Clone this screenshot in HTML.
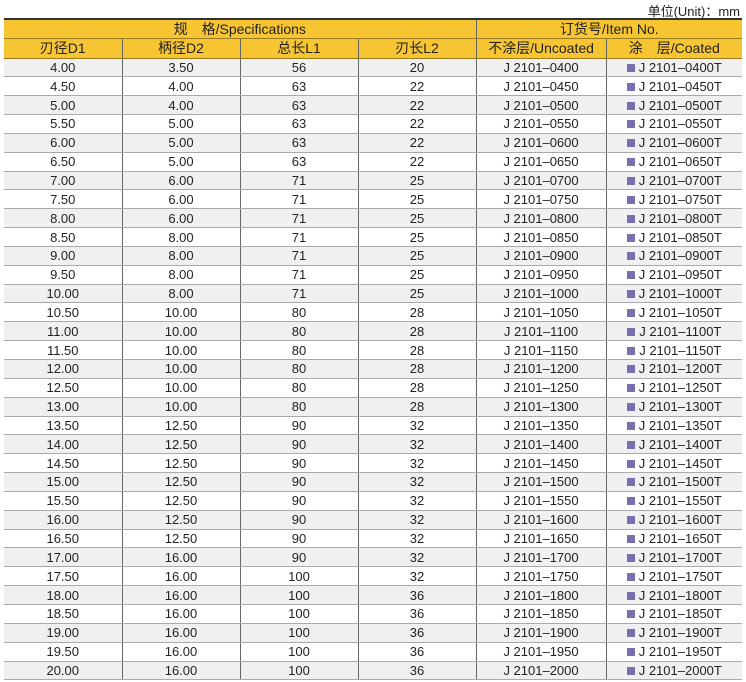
<!DOCTYPE html>
<html><head><meta charset="utf-8"><style>
*{margin:0;padding:0;box-sizing:border-box}
body{width:746px;height:682px;background:#fff;font-family:"Liberation Sans","Noto Sans CJK SC",sans-serif;color:#222;position:relative;overflow:hidden}
.unit{position:absolute;right:6px;top:1px;font-size:13px}
table{position:absolute;left:4px;top:18px;width:738px;border-collapse:collapse;table-layout:fixed;font-size:13px}
td{text-align:center;border-left:1px solid #666;border-bottom:1px solid #aaa;height:18.85px;padding:0;line-height:17px;white-space:nowrap}
td:first-child{border-left:none}
tr.h td{background:#f8c532;border-bottom:1px solid #9a7b20;font-size:14px;height:19.5px;color:#222}
tr.top td{border-top:2px solid #333}
tr:nth-child(odd):not(.h) td{background:#f0f0f0}
.sq{display:inline-block;width:8px;height:8px;background:#7a6fae;margin-right:4px;vertical-align:0}
</style></head><body>
<div class="unit">单位(Unit)：mm</div>
<table>
<colgroup><col style="width:118px"><col style="width:118px"><col style="width:118px"><col style="width:118px"><col style="width:130px"><col style="width:136px"></colgroup>
<tr class="h top"><td colspan="4">规　格/Specifications</td><td colspan="2">订货号/Item No.</td></tr>
<tr class="h"><td>刃径D1</td><td>柄径D2</td><td>总长L1</td><td>刃长L2</td><td>不涂层/Uncoated</td><td>涂　层/Coated</td></tr>
<tr><td>4.00</td><td>3.50</td><td>56</td><td>20</td><td>J 2101–0400</td><td><span class="sq"></span>J 2101–0400T</td></tr>
<tr><td>4.50</td><td>4.00</td><td>63</td><td>22</td><td>J 2101–0450</td><td><span class="sq"></span>J 2101–0450T</td></tr>
<tr><td>5.00</td><td>4.00</td><td>63</td><td>22</td><td>J 2101–0500</td><td><span class="sq"></span>J 2101–0500T</td></tr>
<tr><td>5.50</td><td>5.00</td><td>63</td><td>22</td><td>J 2101–0550</td><td><span class="sq"></span>J 2101–0550T</td></tr>
<tr><td>6.00</td><td>5.00</td><td>63</td><td>22</td><td>J 2101–0600</td><td><span class="sq"></span>J 2101–0600T</td></tr>
<tr><td>6.50</td><td>5.00</td><td>63</td><td>22</td><td>J 2101–0650</td><td><span class="sq"></span>J 2101–0650T</td></tr>
<tr><td>7.00</td><td>6.00</td><td>71</td><td>25</td><td>J 2101–0700</td><td><span class="sq"></span>J 2101–0700T</td></tr>
<tr><td>7.50</td><td>6.00</td><td>71</td><td>25</td><td>J 2101–0750</td><td><span class="sq"></span>J 2101–0750T</td></tr>
<tr><td>8.00</td><td>6.00</td><td>71</td><td>25</td><td>J 2101–0800</td><td><span class="sq"></span>J 2101–0800T</td></tr>
<tr><td>8.50</td><td>8.00</td><td>71</td><td>25</td><td>J 2101–0850</td><td><span class="sq"></span>J 2101–0850T</td></tr>
<tr><td>9.00</td><td>8.00</td><td>71</td><td>25</td><td>J 2101–0900</td><td><span class="sq"></span>J 2101–0900T</td></tr>
<tr><td>9.50</td><td>8.00</td><td>71</td><td>25</td><td>J 2101–0950</td><td><span class="sq"></span>J 2101–0950T</td></tr>
<tr><td>10.00</td><td>8.00</td><td>71</td><td>25</td><td>J 2101–1000</td><td><span class="sq"></span>J 2101–1000T</td></tr>
<tr><td>10.50</td><td>10.00</td><td>80</td><td>28</td><td>J 2101–1050</td><td><span class="sq"></span>J 2101–1050T</td></tr>
<tr><td>11.00</td><td>10.00</td><td>80</td><td>28</td><td>J 2101–1100</td><td><span class="sq"></span>J 2101–1100T</td></tr>
<tr><td>11.50</td><td>10.00</td><td>80</td><td>28</td><td>J 2101–1150</td><td><span class="sq"></span>J 2101–1150T</td></tr>
<tr><td>12.00</td><td>10.00</td><td>80</td><td>28</td><td>J 2101–1200</td><td><span class="sq"></span>J 2101–1200T</td></tr>
<tr><td>12.50</td><td>10.00</td><td>80</td><td>28</td><td>J 2101–1250</td><td><span class="sq"></span>J 2101–1250T</td></tr>
<tr><td>13.00</td><td>10.00</td><td>80</td><td>28</td><td>J 2101–1300</td><td><span class="sq"></span>J 2101–1300T</td></tr>
<tr><td>13.50</td><td>12.50</td><td>90</td><td>32</td><td>J 2101–1350</td><td><span class="sq"></span>J 2101–1350T</td></tr>
<tr><td>14.00</td><td>12.50</td><td>90</td><td>32</td><td>J 2101–1400</td><td><span class="sq"></span>J 2101–1400T</td></tr>
<tr><td>14.50</td><td>12.50</td><td>90</td><td>32</td><td>J 2101–1450</td><td><span class="sq"></span>J 2101–1450T</td></tr>
<tr><td>15.00</td><td>12.50</td><td>90</td><td>32</td><td>J 2101–1500</td><td><span class="sq"></span>J 2101–1500T</td></tr>
<tr><td>15.50</td><td>12.50</td><td>90</td><td>32</td><td>J 2101–1550</td><td><span class="sq"></span>J 2101–1550T</td></tr>
<tr><td>16.00</td><td>12.50</td><td>90</td><td>32</td><td>J 2101–1600</td><td><span class="sq"></span>J 2101–1600T</td></tr>
<tr><td>16.50</td><td>12.50</td><td>90</td><td>32</td><td>J 2101–1650</td><td><span class="sq"></span>J 2101–1650T</td></tr>
<tr><td>17.00</td><td>16.00</td><td>90</td><td>32</td><td>J 2101–1700</td><td><span class="sq"></span>J 2101–1700T</td></tr>
<tr><td>17.50</td><td>16.00</td><td>100</td><td>32</td><td>J 2101–1750</td><td><span class="sq"></span>J 2101–1750T</td></tr>
<tr><td>18.00</td><td>16.00</td><td>100</td><td>36</td><td>J 2101–1800</td><td><span class="sq"></span>J 2101–1800T</td></tr>
<tr><td>18.50</td><td>16.00</td><td>100</td><td>36</td><td>J 2101–1850</td><td><span class="sq"></span>J 2101–1850T</td></tr>
<tr><td>19.00</td><td>16.00</td><td>100</td><td>36</td><td>J 2101–1900</td><td><span class="sq"></span>J 2101–1900T</td></tr>
<tr><td>19.50</td><td>16.00</td><td>100</td><td>36</td><td>J 2101–1950</td><td><span class="sq"></span>J 2101–1950T</td></tr>
<tr><td>20.00</td><td>16.00</td><td>100</td><td>36</td><td>J 2101–2000</td><td><span class="sq"></span>J 2101–2000T</td></tr>
</table>
</body></html>
